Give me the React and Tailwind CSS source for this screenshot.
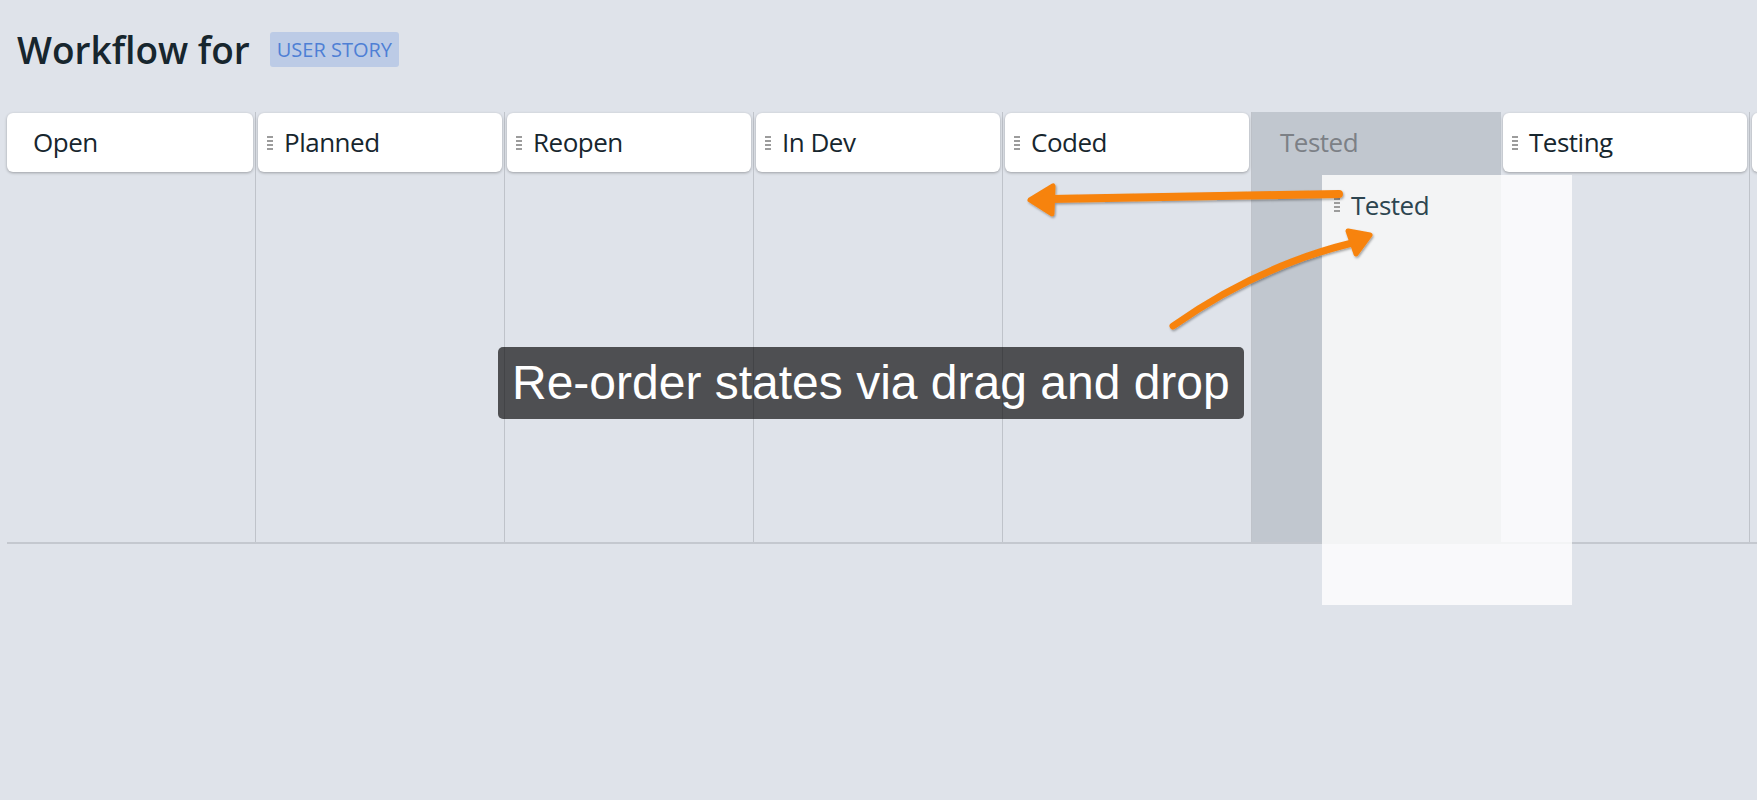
const columns = [
  { name: 'Open', handle: false },
  { name: 'Planned', handle: true },
  { name: 'Reopen', handle: true },
  { name: 'In Dev', handle: true },
  { name: 'Coded', handle: true },
  { name: 'Tested', ghost: true },
  { name: 'Testing', handle: true },
  { name: '', handle: false },
]

function Grip() {
  return (
    <svg width="6" height="14" viewBox="0 0 6 14" className="shrink-0">
      <rect x="0" y="0" width="6" height="2" fill="#9c9c9c" />
      <rect x="0" y="4" width="6" height="2" fill="#9c9c9c" />
      <rect x="0" y="8" width="6" height="2" fill="#9c9c9c" />
      <rect x="0" y="12" width="6" height="2" fill="#9c9c9c" />
    </svg>
  )
}

function Arrows() {
  return (
    <svg width="1757" height="800" viewBox="0 0 1757 800" className="absolute inset-0 pointer-events-none">
      <defs>
        <filter id="shadow" x="-10%" y="-10%" width="120%" height="120%">
          <feDropShadow dx="1" dy="1.5" stdDeviation="1" floodColor="#000" floodOpacity="0.35" />
        </filter>
      </defs>
      <g filter="url(#shadow)" fill="#f7830e" stroke="#f7830e" strokeLinecap="round" strokeLinejoin="round">
        {/* left arrow */}
        <path d="M1339 194 L1050 199" fill="none" strokeWidth="8" />
        <polygon points="1030,200 1053,186 1052,214" strokeWidth="5" />
        {/* curved arrow */}
        <path d="M1173 326 Q1258 266 1352 243" fill="none" strokeWidth="7" />
        <polygon points="1370,235 1348,231 1356,254" strokeWidth="5" />
      </g>
    </svg>
  )
}

export default function App() {
  return (
    <div className="relative w-[1757px] h-[800px] overflow-hidden bg-[#dfe3ea] font-['Open_Sans',sans-serif]">
      {/* Header */}
      <div className="flex items-center pt-[32px] pl-[17px]">
        <h1 className="text-[37px] leading-[35px] font-semibold text-[#17262e]">Workflow for</h1>
        <span className="ml-[20px] h-[35px] px-[7px] flex items-center rounded-[3px] bg-[#bccbe6] text-[20px] text-[#4e7fd5]">
          USER STORY
        </span>
      </div>

      {/* Board */}
      <div className="mt-[45px] ml-[7px] w-max flex h-[432px] border-b-2 border-[#c4c8cf]">
        {columns.map((col, i) =>
          col.ghost ? (
            <div key={i} className="w-[249px] shrink-0 h-full bg-[#c1c7cf]">
              <div className="h-[59px] mt-[1px] flex items-center pl-[28px] text-[26px] tracking-[-0.5px] text-[#7c8086]">
                {col.name}
              </div>
            </div>
          ) : (
            <div
              key={i}
              className={`w-[249px] shrink-0 h-full border-r border-[#bfc3ca] ${i === 0 ? 'pr-[2px]' : 'px-[2px]'}`}
            >
              <div className="h-[59px] mt-[1px] flex items-center rounded-[6px] bg-white shadow-[0_1px_3px_rgba(0,0,0,0.3)]">
                <div className="w-[26px] shrink-0 flex justify-start pl-[9px]">
                  {col.handle && <Grip />}
                </div>
                {col.name && (
                  <span className="text-[26px] tracking-[-0.5px] text-[#17262e]">{col.name}</span>
                )}
              </div>
            </div>
          )
        )}
      </div>

      {/* Dragged card */}
      <div className="absolute left-[1322px] top-[175px] w-[250px] h-[430px] bg-white/80">
        <div className="h-[60px] flex items-center">
          <div className="w-[29px] shrink-0 pl-[12px]">
            <Grip />
          </div>
          <span className="text-[26px] tracking-[-0.5px] text-[#2d4550]">Tested</span>
        </div>
      </div>

      <Arrows />

      {/* Annotation */}
      <div className="absolute left-[498px] top-[347px] h-[72px] px-[14px] rounded-[5px] bg-black/65 text-white text-[48px] leading-[72px] font-['Liberation_Sans',Arial,sans-serif] whitespace-nowrap">
        Re-order states via drag and drop
      </div>
    </div>
  )
}
